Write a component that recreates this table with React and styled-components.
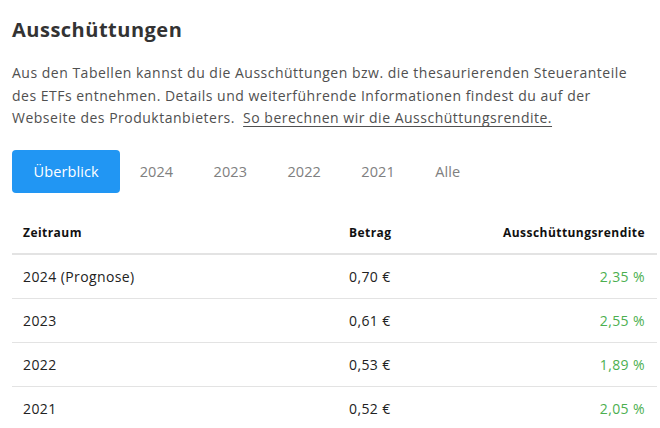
import React from "react";
import styled, { createGlobalStyle } from "styled-components";

const Global = createGlobalStyle`
  html, body { margin: 0; padding: 0; background: #fff; }
  body { font-family: "Open Sans", "Noto Sans", sans-serif; }
`;

const Page = styled.div`
  width: 660px;
  padding: 16px 3px 0 12px;
  box-sizing: border-box;
`;

const Title = styled.h2`
  margin: 0;
  font-size: 20px;
  line-height: 28px;
  font-weight: 700;
  color: #333;
  letter-spacing: 0.5px;
`;

const Intro = styled.p`
  margin: 18px 0 0;
  font-size: 14px;
  line-height: 22.5px;
  color: #505050;
  letter-spacing: 0.5px;
`;

const Link = styled.a`
  color: #505050;
  text-decoration: underline;
  text-underline-offset: 3px;
  margin-left: 4px;
`;

const Tabs = styled.div`
  display: flex;
  margin-top: 20px;
  height: 43px;
`;

const Tab = styled.button`
  border: none;
  background: ${(p) => (p.$active ? "#2196f3" : "transparent")};
  color: ${(p) => (p.$active ? "#fff" : "#808080")};
  border-radius: 4px;
  padding: 0 ${(p) => (p.$active ? "21.5px" : "19.5px")};
  margin-right: ${(p) => (p.$active ? "0" : "1.3px")};
  height: 43px;
  font-family: inherit;
  font-size: 14.5px;
  letter-spacing: 0.1px;
  cursor: pointer;
`;

const Table = styled.div`
  margin-top: 18px;
  width: 645px;
`;

const Row = styled.div`
  display: grid;
  grid-template-columns: 326px 140px 1fr;
  align-items: center;
  height: 43px;
  border-bottom: ${(p) => (p.$last ? "none" : "1px solid #e3e3e3")};
`;

const HeadRow = styled(Row)`
  height: 40px;
  padding-top: 2px;
  border-bottom: 2px solid #e3e3e3;
`;

const Cell = styled.div`
  padding: 0 12px 0 11px;
  font-size: ${(p) => (p.$head ? "12px" : "14px")};
  font-weight: ${(p) => (p.$head ? 700 : 400)};
  letter-spacing: ${(p) => (p.$head ? "0.45px" : "0.4px")};
  color: ${(p) => (p.$green ? "#4caf50" : p.$head ? "#111" : "#222")};
  text-align: ${(p) => (p.$right ? "right" : "left")};
`;

const rows = [
  ["2024 (Prognose)", "0,70 €", "2,35 %"],
  ["2023", "0,61 €", "2,55 %"],
  ["2022", "0,53 €", "1,89 %"],
  ["2021", "0,52 €", "2,05 %"],
];

export default function App() {
  return (
    <>
      <Global />
      <Page>
        <Title>Ausschüttungen</Title>
        <Intro>
          Aus den Tabellen kannst du die Ausschüttungen bzw. die thesaurierenden Steueranteile
          <br />
          des ETFs entnehmen. Details und weiterführende Informationen findest du auf der
          <br />
          Webseite des Produktanbieters. <Link href="#">So berechnen wir die Ausschüttungsrendite.</Link>
        </Intro>
        <Tabs>
          <Tab $active>Überblick</Tab>
          <Tab>2024</Tab>
          <Tab>2023</Tab>
          <Tab>2022</Tab>
          <Tab>2021</Tab>
          <Tab>Alle</Tab>
        </Tabs>
        <Table>
          <HeadRow>
            <Cell $head>Zeitraum</Cell>
            <Cell $head>Betrag</Cell>
            <Cell $head $right>Ausschüttungsrendite</Cell>
          </HeadRow>
          {rows.map((r, i) => (
            <Row key={r[0]} $last={i === rows.length - 1}>
              <Cell>{r[0]}</Cell>
              <Cell>{r[1]}</Cell>
              <Cell $green $right>{r[2]}</Cell>
            </Row>
          ))}
        </Table>
      </Page>
    </>
  );
}
